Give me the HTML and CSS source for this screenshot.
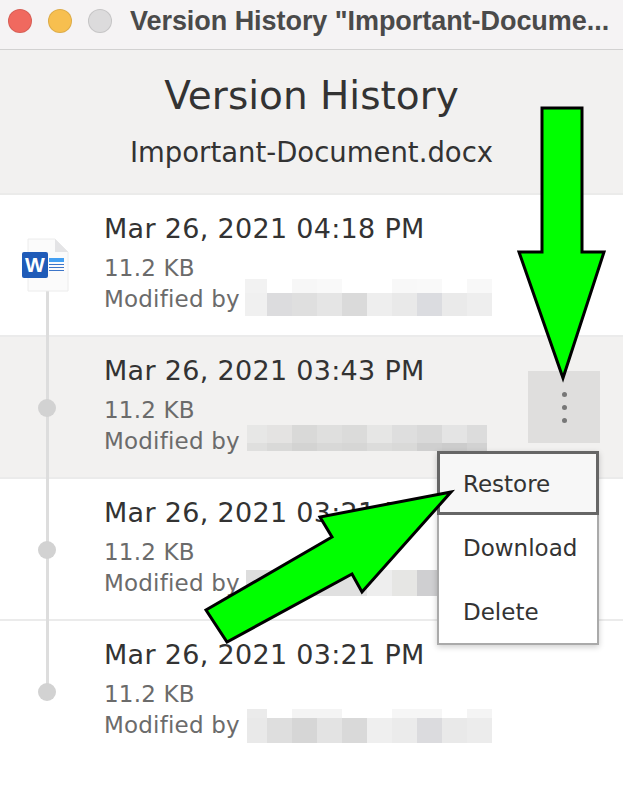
FILE: index.html
```html
<!DOCTYPE html>
<html lang="en">

<head>
    <meta charset="UTF-8">
    <meta name="viewport" content="width=device-width, initial-scale=1.0">
    <title>Version History</title>
    <link rel="stylesheet" href="styles.css">
</head>

<body>
    <div class="window">
        <div class="titlebar">
            <span class="light red"></span>
            <span class="light yellow"></span>
            <span class="light gray"></span>
            <span class="window-title">Version History "Important-Docume...</span>
        </div>

        <div class="header">
            <h1>Version History</h1>
            <p>Important-Document.docx</p>
        </div>

        <div class="row first">
            <div class="rail">
                <svg class="word-icon" width="50" height="56" viewBox="0 0 50 56">
                    <path d="M7 1H34L47 14V53H7Z" fill="#fbfbfb" stroke="#ececec"/>
                    <path d="M34 1V14H47Z" fill="#e4e4e6"/>
                    <rect x="1" y="14" width="26" height="26" rx="2" fill="#1f5bb8"/>
                    <text x="14" y="34" class="word-w">W</text>
                    <rect x="28" y="20" width="15" height="4" fill="#44a0f2"/>
                    <rect x="28" y="26" width="15" height="1" fill="#3d76c9"/>
                    <rect x="28" y="29" width="15" height="1" fill="#3d76c9"/>
                    <rect x="28" y="32" width="15" height="1" fill="#3d76c9"/>
                </svg>
            </div>
            <div class="info">
                <div class="date">Mar 26, 2021 04:18 PM</div>
                <div class="size">11.2 KB</div>
                <div class="by">
                    <span class="by-label">Modified by</span>
                    <svg class="blur" width="250" height="40" viewBox="0 0 250 40">
                        <rect x="0" y="1" width="22" height="14" fill="#f2f2f2"/>
                        <rect x="47" y="1" width="25" height="14" fill="#f7f7f7"/>
                        <rect x="72" y="1" width="25" height="14" fill="#f9f9f9"/>
                        <rect x="147" y="1" width="25" height="14" fill="#f8f8f8"/>
                        <rect x="172" y="1" width="25" height="14" fill="#f9f9f9"/>
                        <rect x="222" y="1" width="25" height="14" fill="#f8f8f8"/>
                        <rect x="0" y="15" width="22" height="23" fill="#f0f0f0"/>
                        <rect x="22" y="15" width="25" height="23" fill="#dcdcde"/>
                        <rect x="47" y="15" width="25" height="23" fill="#dfdfdf"/>
                        <rect x="72" y="15" width="25" height="23" fill="#e5e5e5"/>
                        <rect x="97" y="15" width="25" height="23" fill="#dadada"/>
                        <rect x="122" y="15" width="25" height="23" fill="#eeeeee"/>
                        <rect x="147" y="15" width="25" height="23" fill="#e9e9e9"/>
                        <rect x="172" y="15" width="25" height="23" fill="#dbdce0"/>
                        <rect x="197" y="15" width="25" height="23" fill="#eaeaea"/>
                        <rect x="222" y="15" width="25" height="23" fill="#eeeeee"/>
                    </svg>
                </div>
            </div>
        </div>

        <div class="row active">
            <div class="rail"><span class="dot"></span></div>
            <div class="info">
                <div class="date">Mar 26, 2021 03:43 PM</div>
                <div class="size">11.2 KB</div>
                <div class="by">
                    <span class="by-label">Modified by</span>
                    <svg class="blur" width="250" height="40" viewBox="0 0 250 40">
                        <rect x="2" y="5" width="20" height="18" fill="#e7e7e6"/>
                        <rect x="22" y="5" width="25" height="18" fill="#e4e3e2"/>
                        <rect x="47" y="5" width="25" height="18" fill="#d9d9d8"/>
                        <rect x="72" y="5" width="25" height="18" fill="#dfdfde"/>
                        <rect x="97" y="5" width="25" height="18" fill="#dbdbda"/>
                        <rect x="122" y="5" width="25" height="18" fill="#e6e6e5"/>
                        <rect x="147" y="5" width="25" height="18" fill="#dedede"/>
                        <rect x="172" y="5" width="25" height="18" fill="#d9d9d9"/>
                        <rect x="197" y="5" width="25" height="18" fill="#e4e4e4"/>
                        <rect x="222" y="5" width="20" height="18" fill="#dcdcdc"/>
                        <rect x="2" y="23" width="20" height="8" fill="#dfdfde"/>
                        <rect x="22" y="23" width="25" height="8" fill="#d9d9d8"/>
                        <rect x="47" y="23" width="25" height="8" fill="#d3d3d2"/>
                        <rect x="72" y="23" width="25" height="8" fill="#d8d8d7"/>
                        <rect x="97" y="23" width="25" height="8" fill="#d6d6d5"/>
                        <rect x="122" y="23" width="25" height="8" fill="#dcdcdb"/>
                        <rect x="147" y="23" width="25" height="8" fill="#d9d9d8"/>
                        <rect x="172" y="23" width="25" height="8" fill="#cfcfcf"/>
                        <rect x="197" y="23" width="25" height="8" fill="#cccccc"/>
                        <rect x="222" y="23" width="20" height="8" fill="#d2d2d2"/>
                    </svg>
                </div>
            </div>
            <button class="more"><span></span><span></span><span></span></button>
        </div>

        <div class="row">
            <div class="rail"><span class="dot"></span></div>
            <div class="info">
                <div class="date">Mar 26, 2021 03:21 PM</div>
                <div class="size">11.2 KB</div>
                <div class="by">
                    <span class="by-label">Modified by</span>
                    <svg class="blur" width="250" height="40" viewBox="0 0 250 40">
                        <rect x="1" y="8" width="21" height="26" fill="#dddddd"/>
                        <rect x="22" y="8" width="100" height="26" fill="#e0e0e0"/>
                        <rect x="122" y="8" width="25" height="26" fill="#eeeeee"/>
                        <rect x="147" y="8" width="25" height="26" fill="#e6e6e4"/>
                        <rect x="172" y="8" width="21" height="26" fill="#cfcfd1"/>
                    </svg>
                </div>
            </div>
        </div>

        <div class="row last">
            <div class="rail"><span class="dot"></span></div>
            <div class="info">
                <div class="date">Mar 26, 2021 03:21 PM</div>
                <div class="size">11.2 KB</div>
                <div class="by">
                    <span class="by-label">Modified by</span>
                    <svg class="blur" width="250" height="40" viewBox="0 0 250 40">
                        <rect x="2" y="5" width="20" height="9" fill="#ebebeb"/>
                        <rect x="47" y="5" width="50" height="9" fill="#f4f4f4"/>
                        <rect x="147" y="5" width="50" height="9" fill="#f6f6f6"/>
                        <rect x="222" y="5" width="25" height="9" fill="#f4f4f4"/>
                        <rect x="2" y="14" width="20" height="25" fill="#e9e9e9"/>
                        <rect x="22" y="14" width="25" height="25" fill="#dedede"/>
                        <rect x="47" y="14" width="25" height="25" fill="#d6d6d6"/>
                        <rect x="72" y="14" width="25" height="25" fill="#e3e3e3"/>
                        <rect x="97" y="14" width="25" height="25" fill="#d9d9d9"/>
                        <rect x="122" y="14" width="25" height="25" fill="#efefef"/>
                        <rect x="147" y="14" width="25" height="25" fill="#ebebeb"/>
                        <rect x="172" y="14" width="25" height="25" fill="#dbdbde"/>
                        <rect x="197" y="14" width="25" height="25" fill="#e9e9e9"/>
                        <rect x="222" y="14" width="25" height="25" fill="#ececec"/>
                    </svg>
                </div>
            </div>
        </div>

        <div class="menu">
            <div class="menu-item selected">Restore</div>
            <div class="menu-item">Download</div>
            <div class="menu-item">Delete</div>
        </div>

        <!-- green arrows pasted on top of the screenshot -->
        <svg class="arrows" width="623" height="786" viewBox="0 0 623 786">
            <polygon points="542,108 582,108 582,252 604,252 563,378 519,252 542,252"/>
            <polygon points="451,492 320,517 332,537 206,610 227,642 352,574 362,592"/>
        </svg>
    </div>
</body>

</html>
```

FILE: styles.css
```css
body {
    margin: 0;
    padding: 0;
    background-color: white;
    font-family: "DejaVu Sans", sans-serif;
}

.window {
    position: relative;
    width: 623px;
    height: 786px;
    overflow: hidden;
}

.titlebar {
    display: flex;
    align-items: center;
    height: 42px;
    padding: 0 0 7px 8px;
    background: #f5f3f4;
    border-bottom: 1px solid #d2d1d1;
}

.light {
    width: 24px;
    height: 24px;
    margin-right: 16px;
    border-radius: 50%;
    box-sizing: border-box;
    border: 1px solid rgba(0, 0, 0, 0.1);
}

.red {
    background: #f0695f;
}

.yellow {
    background: #f7bf4f;
}

.gray {
    background: #dcdbdc;
    margin-right: 18px;
}

.window-title {
    font-family: "Liberation Sans", sans-serif;
    font-size: 27px;
    font-weight: bold;
    letter-spacing: -0.05px;
    color: #4a4a4a;
    white-space: nowrap;
}

.header {
    height: 143px;
    background: #f2f1f0;
    border-bottom: 2px solid #ebebea;
    text-align: center;
    color: #333;
}

.header h1 {
    margin: 0;
    padding-top: 20px;
    font-size: 39px;
    font-weight: normal;
    line-height: 52px;
}

.header p {
    margin: 0;
    padding-top: 12px;
    font-size: 27.5px;
    line-height: 36px;
}

.row {
    position: relative;
    display: flex;
    height: 140px;
    border-bottom: 2px solid #ebebeb;
}

.row.last {
    border-bottom: none;
}

.row.active {
    background: #f2f1f0;
}

.rail {
    position: relative;
    flex: none;
    width: 104px;
}

.rail::before {
    content: "";
    position: absolute;
    left: 46px;
    top: 0;
    bottom: -2px;
    width: 3px;
    background: #dddddd;
}

.first .rail::before {
    top: 95px;
}

.last .rail::before {
    bottom: auto;
    height: 71px;
}

.dot {
    position: absolute;
    left: 38px;
    top: 62px;
    width: 18px;
    height: 18px;
    border-radius: 50%;
    background: #d2d2d2;
}

.word-icon {
    position: absolute;
    left: 21px;
    top: 43px;
}

.word-w {
    font-family: "Liberation Sans", sans-serif;
    font-size: 21px;
    font-weight: bold;
    fill: white;
    text-anchor: middle;
}

.info {
    padding-top: 16px;
}

.date {
    font-size: 27px;
    letter-spacing: 0.3px;
    line-height: 36px;
    color: #333;
    white-space: nowrap;
    margin-bottom: 6px;
}

.size,
.by {
    font-size: 23px;
    letter-spacing: 0.2px;
    line-height: 31px;
    color: #6b6b6b;
}

.by {
    display: flex;
}

.by-label {
    width: 141px;
    white-space: nowrap;
}

.blur {
    flex: none;
    margin-top: -6px;
}

.more {
    position: absolute;
    left: 528px;
    top: 34px;
    display: flex;
    flex-direction: column;
    align-items: center;
    justify-content: center;
    gap: 8px;
    width: 72px;
    height: 72px;
    padding: 0;
    background: #dfdedd;
    border: none;
}

.more span {
    width: 5px;
    height: 5px;
    border-radius: 50%;
    background: #777;
}

.menu {
    position: absolute;
    left: 437px;
    top: 451px;
    width: 158px;
    background: white;
    border: 2px solid #aaa;
    box-shadow: 0 2px 6px rgba(0, 0, 0, 0.2);
}

.menu-item {
    height: 64px;
    box-sizing: border-box;
    padding-left: 24px;
    font-size: 23px;
    line-height: 66px;
    color: #333;
}

.menu-item.selected {
    margin: -2px -2px 0;
    padding-left: 23px;
    line-height: 60px;
    background: #f7f7f7;
    border: 3px solid #666;
}

.arrows {
    position: absolute;
    left: 0;
    top: 0;
}

.arrows polygon {
    fill: #00ff00;
    stroke: black;
    stroke-width: 3;
}
```
